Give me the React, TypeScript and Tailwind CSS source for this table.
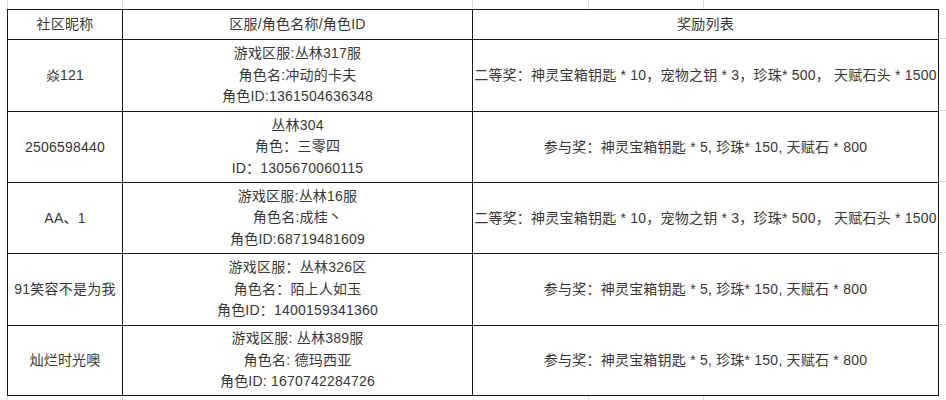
const rows = [
  {
    name: "焱121",
    h: "h-[72px]",
    info: ["游戏区服:丛林317服", "角色名:冲动的卡夫", "角色ID:1361504636348"],
    reward: "二等奖：神灵宝箱钥匙 * 10，宠物之钥 * 3，珍珠* 500， 天赋石头 * 1500",
  },
  {
    name: "2506598440",
    h: "h-[71px]",
    info: ["丛林304", "角色：三零四", "ID：1305670060115"],
    reward: "参与奖：神灵宝箱钥匙 * 5, 珍珠* 150, 天赋石 * 800",
  },
  {
    name: "AA、1",
    h: "h-[71px]",
    info: ["游戏区服:丛林16服", "角色名:成桂丶", "角色ID:68719481609"],
    reward: "二等奖：神灵宝箱钥匙 * 10，宠物之钥 * 3，珍珠* 500， 天赋石头 * 1500",
  },
  {
    name: "91笑容不是为我",
    h: "h-[72px]",
    info: ["游戏区服：丛林326区", "角色名：陌上人如玉", "角色ID：1400159341360"],
    reward: "参与奖：神灵宝箱钥匙 * 5, 珍珠* 150, 天赋石 * 800",
  },
  {
    name: "灿烂时光噢",
    h: "h-[70px]",
    info: ["游戏区服: 丛林389服", "角色名: 德玛西亚", "角色ID: 1670742284726"],
    reward: "参与奖：神灵宝箱钥匙 * 5, 珍珠* 150, 天赋石 * 800",
  },
]

const App = () => {
  return (
    <main
      className="w-[946px] h-[400px] bg-white flex flex-col overflow-hidden text-[14px] tracking-[0.22px] text-[#383838]"
      style={{ fontFamily: '"Liberation Sans", "Noto Sans CJK SC", sans-serif' }}
    >
      {/* Sheet gridlines above */}
      <div className="flex h-[9px] shrink-0">
        <div className="w-[7px]" />
        <div className="w-[115px] border-l border-[#dcdcdc]" />
        <div className="w-[350px] border-l border-[#dcdcdc]" />
        <div className="w-[116px] border-l border-[#dcdcdc]" />
        <div className="w-[115px] border-l border-[#dcdcdc]" />
        <div className="w-[235px] border-l border-[#dcdcdc]" />
      </div>

      <div className="flex">
        <div className="w-[7px] shrink-0" />

        {/* Table */}
        <div className="w-[932px] shrink-0 border-t border-l border-[#1c1c1c]">
          <div className="grid grid-cols-[115px_350px_466px] h-[30px]">
            <div className="flex items-center justify-center border-r border-b border-[#1c1c1c]">社区昵称</div>
            <div className="flex items-center justify-center border-r border-b border-[#1c1c1c]">区服/角色名称/角色ID</div>
            <div className="flex items-center justify-center border-r border-b border-[#1c1c1c]">奖励列表</div>
          </div>

          {rows.map((r, i) => (
            <div key={i} className={`grid grid-cols-[115px_350px_466px] ${r.h}`}>
              <div className="flex items-center justify-center border-r border-b border-[#1c1c1c]">{r.name}</div>
              <div className="flex flex-col items-center justify-center leading-[21.5px] border-r border-b border-[#1c1c1c]">
                {r.info.map((t) => (
                  <span key={t} className="whitespace-nowrap">{t}</span>
                ))}
              </div>
              <div className="flex items-center justify-center whitespace-nowrap border-r border-b border-[#1c1c1c]">
                {r.reward}
              </div>
            </div>
          ))}
        </div>

        {/* Sheet gridlines to the right */}
        <div className="flex-1 flex flex-col">
          <div className="h-[30px] border-b border-[#dcdcdc]" />
          <div className="h-[72px] border-b border-[#dcdcdc]" />
          <div className="h-[71px] border-b border-[#dcdcdc]" />
          <div className="h-[71px] border-b border-[#dcdcdc]" />
          <div className="h-[72px] border-b border-[#dcdcdc]" />
        </div>
      </div>

      {/* Sheet gridlines below */}
      <div className="flex flex-1">
        <div className="w-[7px]" />
        <div className="w-[115px] border-l border-[#dcdcdc]" />
        <div className="w-[466px] border-l border-[#dcdcdc]" />
        <div className="w-[115px] border-l border-[#dcdcdc]" />
        <div className="w-[235px] border-l border-[#dcdcdc]" />
      </div>
    </main>
  )
}

export default App
